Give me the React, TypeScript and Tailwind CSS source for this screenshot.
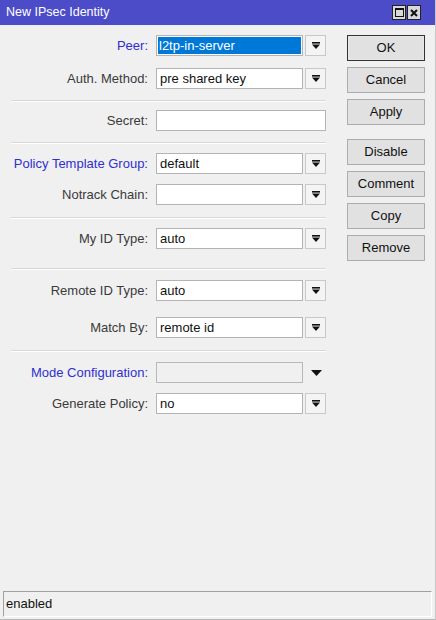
import React from "react";

const DropIcon = () => (
  <svg width="8" height="7" viewBox="0 0 8 7" className="block">
    <rect x="0" y="0" width="8" height="1.6" fill="#111" />
    <polygon points="0,2.6 8,2.6 4,7" fill="#111" />
  </svg>
);

type RowProps = {
  label: string;
  value?: string;
  blue?: boolean;
  selected?: boolean;
  kind?: "combo" | "text" | "disabled";
  className?: string;
};

const Row = ({ label, value = "", blue, selected, kind = "combo", className = "" }: RowProps) => (
  <div className={"flex items-center h-[21px] " + className}>
    <div className={"w-[149px] text-right pr-[1px] whitespace-nowrap " + (blue ? "text-[#2f2fcf]" : "text-[#3a3a3a]")}>
      {label}
    </div>
    <div className="w-[7px]" />
    {kind === "text" ? (
      <div className="w-[170px] h-[21px] bg-white border border-[#b4b4b4]" />
    ) : kind === "disabled" ? (
      <>
        <div className="w-[147px] h-[21px] border border-[#b8b8b8] bg-[#f0f0f0]" />
        <div className="w-[23px] h-[21px] flex items-center justify-center">
          <svg width="11" height="6" viewBox="0 0 11 6" className="block ml-[3px]">
            <polygon points="0,0 11,0 5.5,6" fill="#111" />
          </svg>
        </div>
      </>
    ) : (
      <>
        <div className="w-[147px] h-[21px] bg-white border border-[#b4b4b4] p-[1px] flex">
          {selected ? (
            <div className="flex-1 bg-[#0078d7] text-white leading-[17px] pl-[1px]">{value}</div>
          ) : (
            <div className="flex-1 text-[#111] leading-[17px] pl-[2px]">{value}</div>
          )}
        </div>
        <div className="w-[2px]" />
        <div className="w-[21px] h-[21px] border border-[#c8c8c8] bg-[#f4f4f4] flex items-center justify-center">
          <DropIcon />
        </div>
      </>
    )}
  </div>
);

const Sep = ({ className = "" }: { className?: string }) => (
  <div className={"ml-[11px] w-[315px] h-[2px] border-t border-[#d8d8d8] border-b border-b-white " + className} />
);

const Btn = ({ label, def, className = "" }: { label: string; def?: boolean; className?: string }) => (
  <div
    className={
      "w-[78px] h-[26px] flex items-center justify-center bg-[#e1e1e1] text-[#111] " +
      (def ? "border border-[#333] shadow-[inset_0_0_0_1px_#e8e8e8]" : "border border-[#adadad]") +
      " " +
      className
    }
  >
    {label}
  </div>
);

export default function App() {
  return (
    <div className="w-[436px] h-[620px] bg-[#f0f0f0] flex flex-col font-['Liberation_Sans',Arial,sans-serif] text-[13px] border-r border-r-[#c8c8c8] border-b border-b-[#b8b8b8] overflow-hidden">
      <div className="h-[25px] bg-[#4c4cc8] flex items-center justify-between pl-[6px] pr-[14px] shrink-0">
        <span className="text-white text-[12.5px]">New IPsec Identity</span>
        <div className="flex gap-[1px]">
          <div className="w-[14px] h-[15px] bg-[#d8d8d8] border border-[#222] flex items-center justify-center">
            <div className="w-[9px] h-[9px] border border-[#111] border-t-2" />
          </div>
          <div className="w-[14px] h-[15px] bg-[#d8d8d8] border border-[#222] flex items-center justify-center">
            <svg width="8" height="8" viewBox="0 0 8 8" className="block">
              <path d="M1 1 L7 7 M7 1 L1 7" stroke="#111" strokeWidth="2" />
            </svg>
          </div>
        </div>
      </div>
      <div className="flex flex-1">
        <div className="w-[340px] pt-[10px] flex flex-col">
          <Row label="Peer:" value="l2tp-in-server" blue selected />
          <Row label="Auth. Method:" value="pre shared key" className="mt-[12px]" />
          <Sep className="mt-[11px]" />
          <Row label="Secret:" kind="text" className="mt-[8px]" />
          <Sep className="mt-[11px]" />
          <Row label="Policy Template Group:" value="default" blue className="mt-[9px]" />
          <Row label="Notrack Chain:" value="" className="mt-[10px]" />
          <Sep className="mt-[12px]" />
          <Row label="My ID Type:" value="auto" className="mt-[9px]" />
          <Sep className="mt-[19px]" />
          <Row label="Remote ID Type:" value="auto" className="mt-[10px]" />
          <Row label="Match By:" value="remote id" className="mt-[16px]" />
          <Sep className="mt-[12px]" />
          <Row label="Mode Configuration:" kind="disabled" blue className="mt-[10px]" />
          <Row label="Generate Policy:" value="no" className="mt-[10px]" />
        </div>
        <div className="pl-[7px] pt-[10px] flex flex-col gap-[6px]">
          <Btn label="OK" def />
          <Btn label="Cancel" />
          <Btn label="Apply" />
          <Btn label="Disable" className="mt-[8px]" />
          <Btn label="Comment" />
          <Btn label="Copy" />
          <Btn label="Remove" />
        </div>
      </div>
      <div className="mx-[3px] mb-[2px] h-[26px] border-t border-l border-[#a0a0a0] border-r border-r-white border-b border-b-white flex items-center pl-[2px] text-[#111]">
        enabled
      </div>
    </div>
  );
}
